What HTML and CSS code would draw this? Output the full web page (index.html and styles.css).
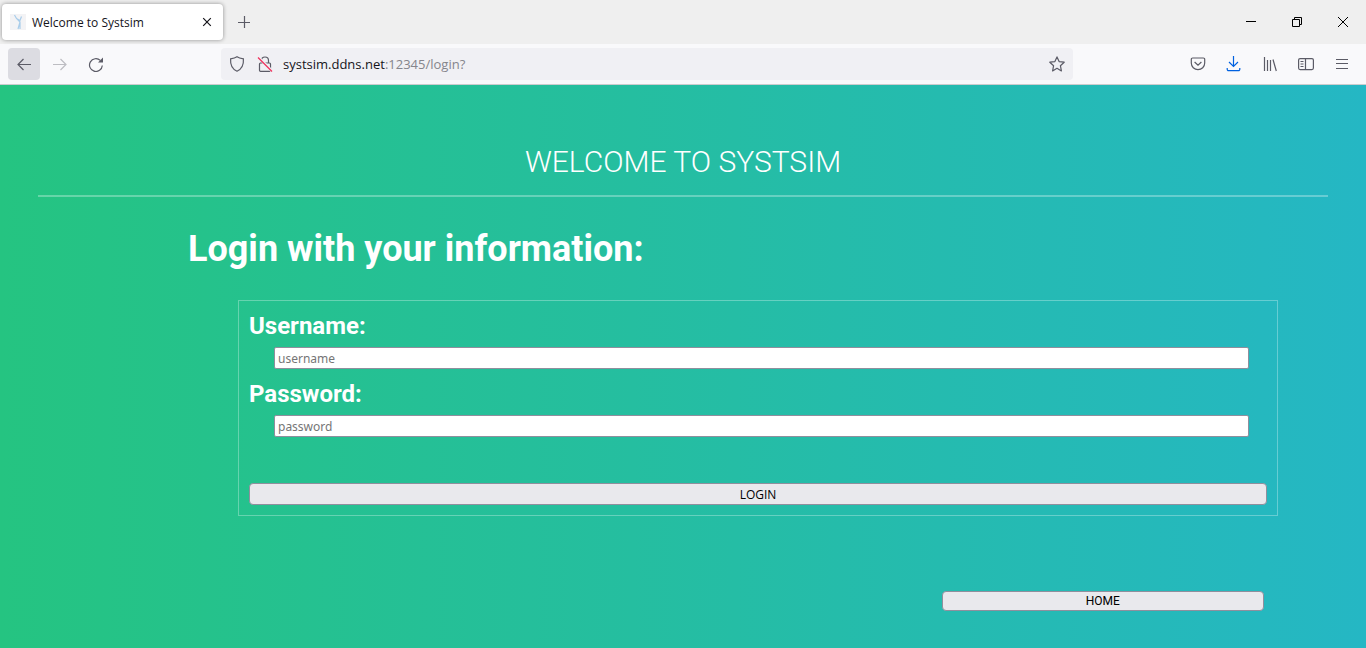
FILE: index.html
```html
<!DOCTYPE html>
<html lang="en">
<head>
<meta charset="utf-8">
<title>Welcome to Systsim</title>
<link rel="stylesheet" href="styles.css">
</head>
<body>
<header class="browser">
  <div class="tabs">
    <div class="tab">
      <svg class="favicon" width="16" height="16" viewBox="0 0 16 16" fill="none"><path fill="#f3f3f5" stroke="none" d="M0 0h16v16H0z"/><path stroke="#a9cdea" stroke-width="1.200" d="M4.500 1l2 3.500 3.500 3.500v7M6.500 4.500l3.500 2 1.500-4M10 8l-2 7"/></svg>
      <span class="tab-title">Welcome to Systsim</span>
      <button class="bare tab-close" aria-label="Close tab"><svg width="10" height="10" viewBox="0 0 10 10"><path d="M1.200 1.200l7.600 7.600M8.800 1.200l-7.600 7.600"/></svg></button>
    </div>
    <button class="bare new-tab" aria-label="New tab"><svg width="12" height="12" viewBox="0 0 12 12"><path d="M6.500 0v12M0 6.500h12"/></svg></button>
    <div class="window-controls">
      <button class="bare" aria-label="Minimize"><svg width="10" height="10" viewBox="0 0 10 10"><path d="M0 4.500h10"/></svg></button>
      <button class="bare" aria-label="Restore"><svg width="10" height="10" viewBox="0 0 10 10"><path d="M.5 2.500h7v7h-7zM2.500 2.500v-2h7v7h-2"/></svg></button>
      <button class="bare" aria-label="Close"><svg width="10" height="10" viewBox="0 0 10 10"><path d="M0 0l10 10M10 0L0 10"/></svg></button>
    </div>
  </div>
  <nav class="toolbar">
    <button class="bare tool back" aria-label="Back"><svg width="16" height="16" viewBox="0 0 16 16"><path d="M15 8.500H2M7.500 3L2 8.500 7.500 14"/></svg></button>
    <button class="bare tool forward" aria-label="Forward" disabled><svg width="16" height="16" viewBox="0 0 16 16"><path d="M1 8.500h13M8.500 3L14 8.500 8.500 14"/></svg></button>
    <button class="bare tool" aria-label="Reload"><svg width="16" height="16" viewBox="0 0 16 16"><path d="M14.300 9.500A6.400 6.400 0 1 1 12.300 4.400"/><path fill="currentColor" stroke="none" d="M15 1.500v5H10z"/></svg></button>
    <div class="address">
      <svg width="16" height="16" viewBox="0 0 16 16"><path d="M8 .8C6 2.200 3.800 2.600 1.600 2.900 1.200 8.500 3.300 13.200 8 15.200c4.700-2 6.800-6.700 6.400-12.300C12.200 2.600 10 2.200 8 .8z"/></svg>
      <svg width="16" height="16" viewBox="0 0 16 16"><path d="M4.500 7V4.500a3.500 3.500 0 0 1 7 0V7M3.500 7h9a1 1 0 0 1 1 1v6.300a1 1 0 0 1-1 1h-9a1 1 0 0 1-1-1V8a1 1 0 0 1 1-1z"/><path stroke="#f0f0f4" stroke-width="3" d="M1 1l14 14"/><path stroke="#f0305c" d="M1 1.500l14 14"/></svg>
      <a class="url" href="#"><span class="host">systsim.ddns.net</span>:12345/login?</a>
      <button class="bare" aria-label="Bookmark"><svg width="16" height="16" viewBox="0 0 16 16"><path stroke-linejoin="round" d="M8 .9l2.100 4.700 5.100.6-3.800 3.500 1 5.200L8 12.300l-4.400 2.600 1-5.200L.8 6.200l5.100-.6z"/></svg></button>
    </div>
    <div class="actions">
      <button class="bare" aria-label="Save to Pocket"><svg width="16" height="16" viewBox="0 0 16 16"><path d="M2.600 2h10.800a1.300 1.300 0 0 1 1.300 1.300V7a6.700 6.700 0 0 1-13.400 0V3.300A1.300 1.300 0 0 1 2.600 2zM4.600 6L8 9.200 11.400 6"/></svg></button>
      <button class="bare download" aria-label="Downloads"><svg width="16" height="16" viewBox="0 0 16 16"><path d="M7.500 0v10.500M3 6l4.500 4.500L12 6M1.200 12v1.300a1.300 1.300 0 0 0 1.300 1.300h10a1.300 1.300 0 0 0 1.300-1.300V12"/></svg></button>
      <button class="bare" aria-label="Library"><svg width="16" height="16" viewBox="0 0 16 16"><path d="M2.500 1v14M5.500 4v11M8.500 4v11M11 3.500L14.300 15"/></svg></button>
      <button class="bare" aria-label="Sidebars"><svg width="16" height="16" viewBox="0 0 16 16"><rect x=".6" y="2.600" width="14.800" height="11" rx="1.500"/><path d="M7.500 2.600v11M2.500 5.500h3M2.500 8h3M2.500 10.500h3"/></svg></button>
      <button class="bare" aria-label="Menu"><svg width="16" height="16" viewBox="0 0 16 16"><path d="M2 3.500h12M2 7.500h12M2 12.500h12"/></svg></button>
    </div>
  </nav>
</header>
<main class="page">
  <h1 class="title">Welcome to Systsim</h1>
  <section class="login">
    <h2 class="heading">Login with your information:</h2>
    <form class="panel">
      <label class="label" for="username">Username:</label>
      <input class="field" id="username" type="text" placeholder="username">
      <label class="label" for="password">Password:</label>
      <input class="field" id="password" type="password" placeholder="password">
      <button class="button submit" type="button">LOGIN</button>
    </form>
  </section>
  <div class="footer"><button class="button home" type="button">HOME</button></div>
</main>
</body>
</html>
```
FILE: styles.css
```css
* { box-sizing: border-box; }
body {
  margin: 0;
  min-height: 100vh;
  display: flex;
  flex-direction: column;
  font-family: Roboto, sans-serif;
}
svg { display: block; fill: none; stroke: currentColor; stroke-width: 1.2; }
.bare {
  display: flex;
  align-items: center;
  justify-content: center;
  padding: 0;
  border: 0;
  background: none;
  color: inherit;
}
.browser {
  background: #f9f9fb;
  border-bottom: 1px solid #ccccce;
  color: #5b5b66;
  font-family: "Open Sans", sans-serif;
}
.tabs { display: flex; align-items: center; height: 44px; background: #efefef; }
.tab {
  display: flex;
  align-items: center;
  width: 221px;
  height: 36px;
  margin-left: 2px;
  padding: 0 11px 0 8px;
  border-radius: 4px;
  background: #fff;
  box-shadow: 0 0 4px rgba(0, 0, 0, 0.4);
  color: #15141a;
}
.tab-title { flex: 1; margin-left: 6px; font-size: 12px; }
.new-tab { margin-left: 15px; }
.window-controls { display: flex; gap: 36px; margin-left: auto; padding-right: 18px; color: #000; }
.window-controls svg { stroke-width: 1; }
.toolbar { display: flex; align-items: center; height: 40px; padding: 0 16px 0 8px; }
.tool { width: 32px; height: 32px; margin-right: 4px; border-radius: 4px; }
.back { background: #dcdce2; }
.forward { color: #bdbdc2; }
.address {
  display: flex;
  align-items: center;
  gap: 12px;
  flex: 0 1 852px;
  height: 32px;
  margin-left: 105px;
  padding: 0 8px;
  border-radius: 4px;
  background: #f0f0f4;
}
.url { flex: 1; margin-left: -2px; font-size: 13px; color: #85858c; text-decoration: none; }
.host { color: #15141a; }
.actions { display: flex; gap: 20px; margin-left: auto; }
.download { color: #0061e0; }
.page {
  flex: 1;
  padding: 38px 38px 37px;
  background: linear-gradient(to right, #25c481, #25b7c4);
  color: #fff;
}
.title {
  margin: 0;
  padding: 21px 0 15px;
  border-bottom: 2px solid rgba(255, 255, 255, 0.3);
  font-size: 30px;
  line-height: 36px;
  font-weight: 300;
  text-align: center;
  text-transform: uppercase;
}
.login { padding: 30px 50px 0 150px; }
.heading { margin: 0; font-size: 36px; line-height: 44px; font-weight: 700; }
.panel {
  display: flex;
  flex-direction: column;
  margin: 29px 0 0 50px;
  padding: 10px;
  border: 1px solid rgba(255, 255, 255, 0.3);
}
.label { font-size: 24px; line-height: 30px; font-weight: 700; }
.field {
  height: 22px;
  margin: 6px 18px 10px 25px;
  padding: 0 3px;
  border: 1px solid #8f8f9d;
  border-radius: 2px;
  background: #fff;
  font-family: "Noto Sans", sans-serif;
  font-size: 12px;
}
.field::placeholder { color: #757575; }
.button {
  height: 22px;
  padding: 0;
  border: 1px solid #8f8f9d;
  border-radius: 4px;
  background: #e9e9ed;
  color: #000;
  font-family: Roboto, sans-serif;
  font-size: 12px;
}
.submit { margin-top: 36px; font-family: "Open Sans", sans-serif; }
.footer { display: flex; justify-content: flex-end; margin-top: 75px; }
.home { width: 25%; height: 20px; margin-right: 64px; }
```
